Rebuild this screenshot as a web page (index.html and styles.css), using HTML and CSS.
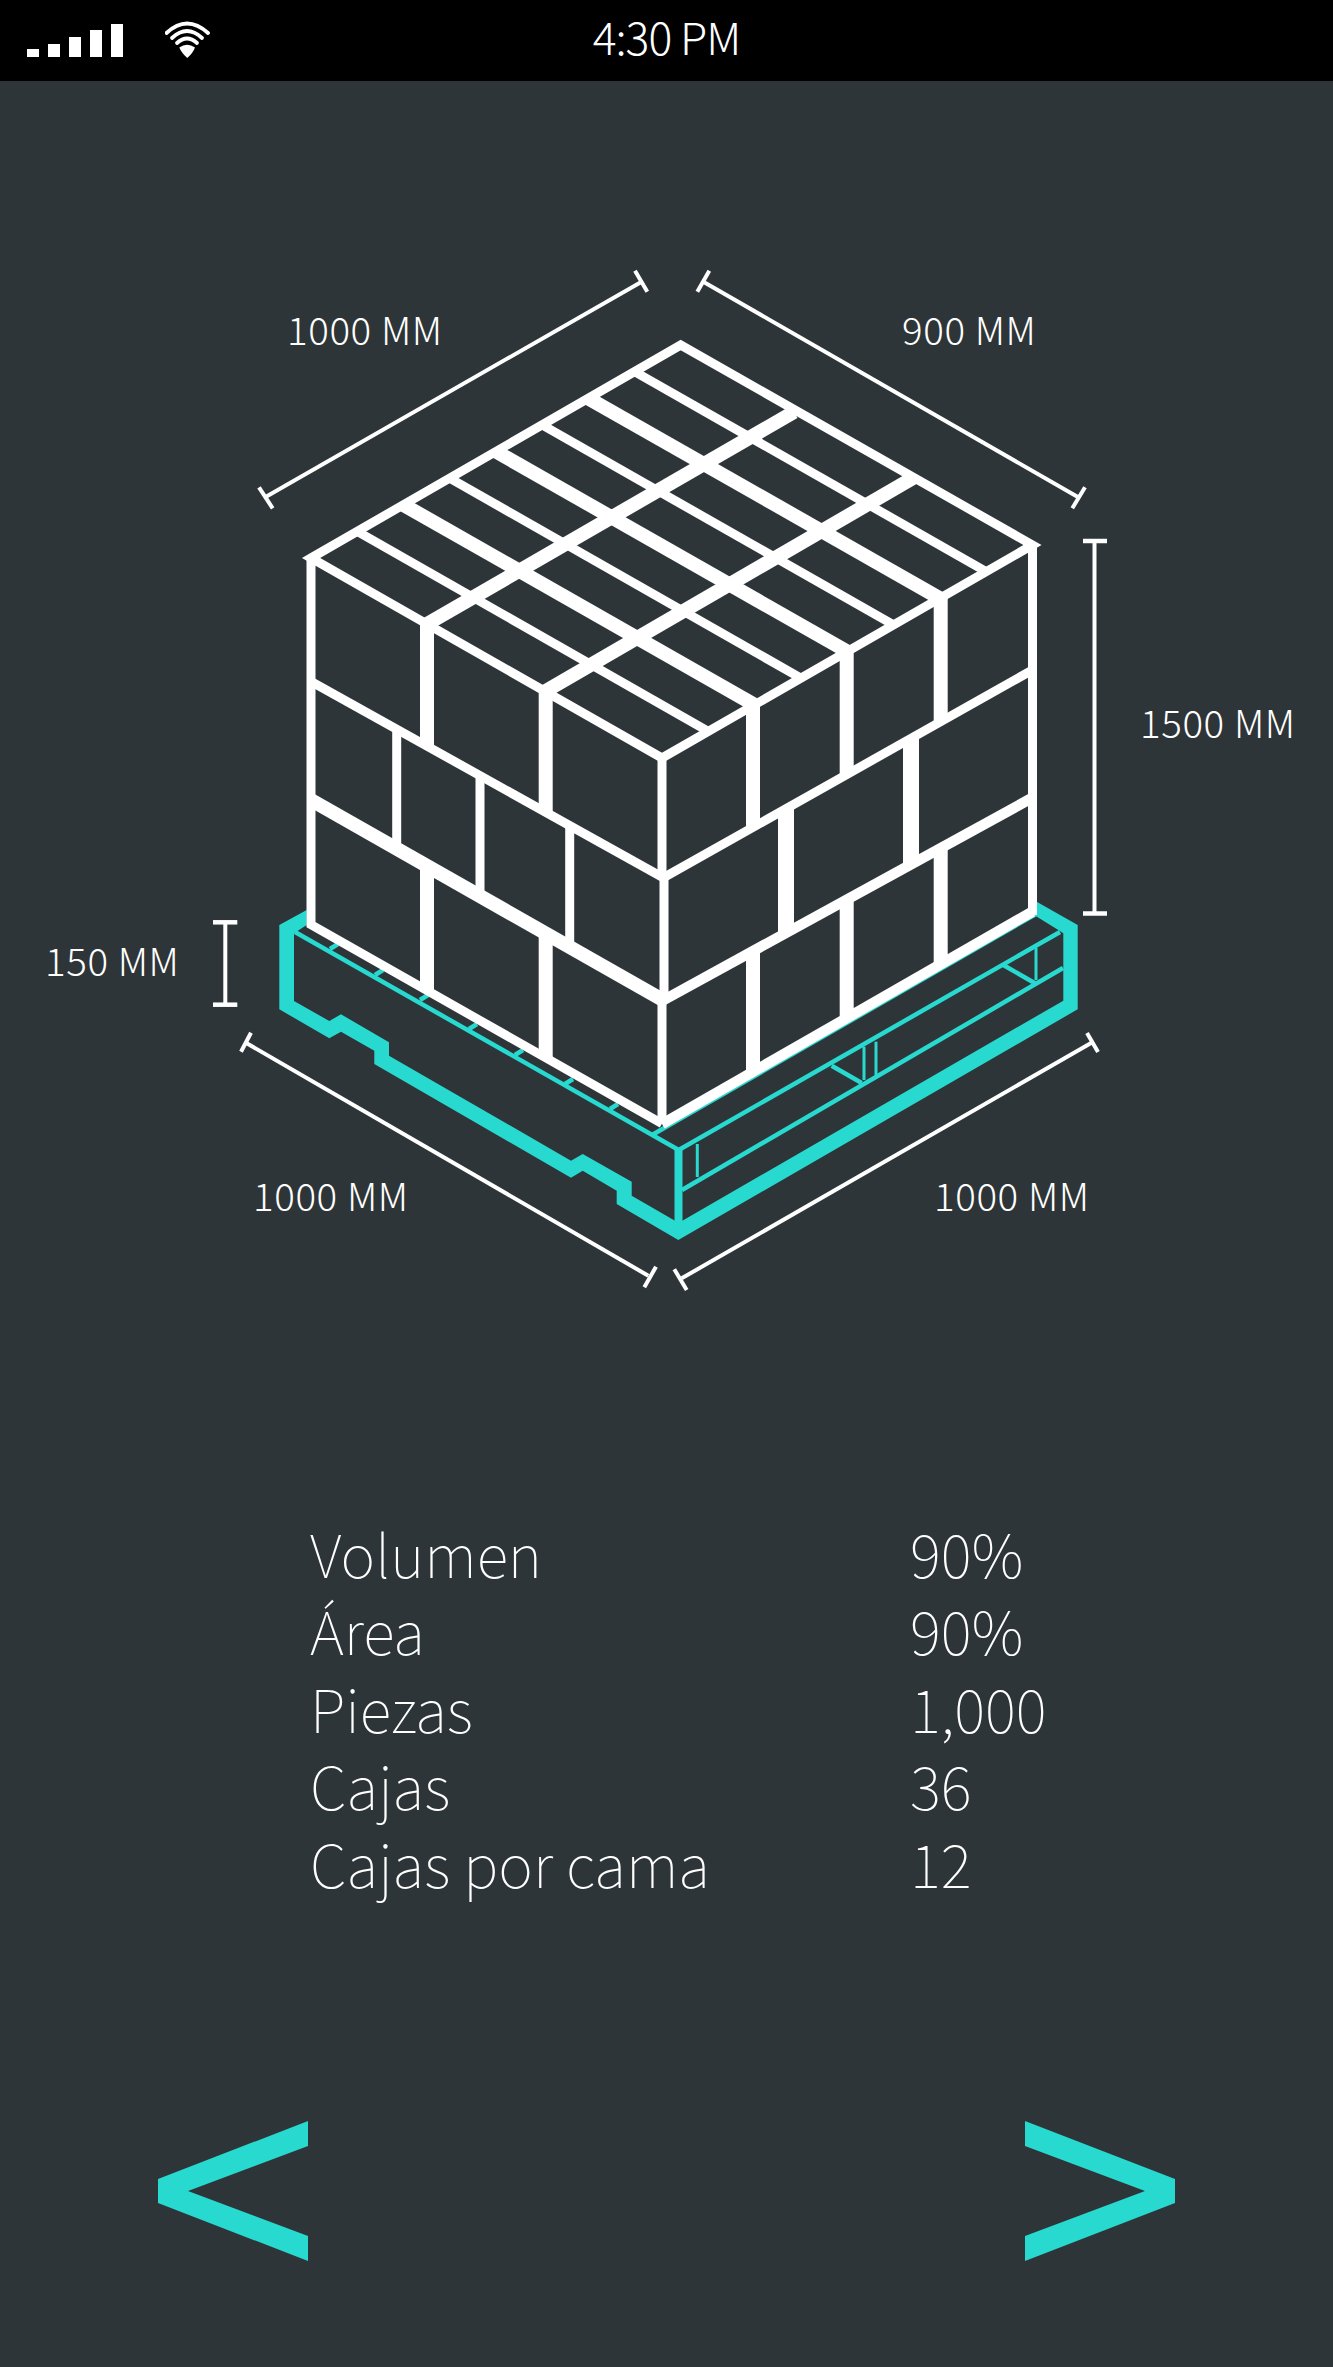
FILE: index.html
```html
<!DOCTYPE html>
<html>
<head>
    <meta charset="utf-8">
    <title>Paletizado</title>
    <link rel="stylesheet" href="styles.css">
</head>
<body>
    <div class="screen">
        <div class="status-bar">
            <div class="status-left">
                <div class="signal">
                    <span class="bar bar1"></span>
                    <span class="bar bar2"></span>
                    <span class="bar bar3"></span>
                    <span class="bar bar4"></span>
                    <span class="bar bar5"></span>
                </div>
                <svg class="wifi" viewBox="165 20 46 40" width="46" height="40">
                    <path class="wifi-arc" d="M166.5 33 Q187 14 208 33"/>
                    <path class="wifi-arc" d="M172 38 Q187 24 202 38"/>
                    <path class="wifi-arc" d="M177 43 Q187 34 197 43"/>
                    <path class="wifi-pick" d="M179.3 47.5 Q187 42 195 47.5 Q193 53 187.3 58 Q181.5 53 179.3 47.5Z"/>
                </svg>
            </div>
            <div class="time">4:30 PM</div>
        </div>

        <svg class="diagram" viewBox="0 81 1333 1319" width="1333" height="1319">
            <!-- pallet -->
            <polygon class="pallet" points="306.7,910 279.3,925 279.3,1009.3 329.3,1038.3 341,1031.7 374.3,1050.7 374.3,1064 571,1177.7 582.7,1170.7 616.7,1190.7 616.7,1204 678.3,1240 1077.7,1009.3 1077.7,925 1036.7,901.7 1035.7,916 1058.3,930 1063.3,933.3 1063.3,1000.7 682.3,1220.7 675,1220.7 631.7,1195.7 631.7,1181.7 582.7,1154 571,1160.7 389,1055.7 389,1042.3 341,1014.3 329.3,1021 294,1001 294,933.3 306.7,925"/>
            <g class="pallet-lines">
                <line x1="295" y1="932" x2="678.7" y2="1150"/>
                <line x1="652" y1="1135" x2="1036" y2="914"/>
                <line x1="678.7" y1="1150" x2="1060" y2="932"/>
                <line x1="682" y1="1190" x2="1063" y2="968"/>
                <line x1="831.7" y1="1065.7" x2="861.7" y2="1083"/>
                <line x1="1003.3" y1="965" x2="1035" y2="983.3"/>
                <line x1="330" y1="949" x2="338" y2="944"/>
                <line x1="375" y1="975" x2="383" y2="970"/>
                <line x1="420" y1="1000" x2="428" y2="995"/>
                <line x1="469" y1="1029" x2="477" y2="1024"/>
                <line x1="515" y1="1055" x2="523" y2="1050"/>
                <line x1="565" y1="1084" x2="573" y2="1079"/>
                <line x1="610" y1="1109" x2="618" y2="1104"/>
            </g>
            <line class="pallet-post" x1="678.5" y1="1150" x2="678.5" y2="1222"/>
            <g class="pallet-struts">
                <line x1="697.3" y1="1144" x2="697.3" y2="1177"/>
                <line x1="864" y1="1046.7" x2="864" y2="1080"/>
                <line x1="876" y1="1041.7" x2="876" y2="1075"/>
                <line x1="1036" y1="948" x2="1036" y2="980"/>
            </g>

            <!-- top face -->
            <g class="thin">
                <line x1="357.2" y1="531.4" x2="708.3" y2="731.4"/>
                <line x1="449.6" y1="478.1" x2="800.9" y2="678.1"/>
                <line x1="542.1" y1="424.9" x2="893.6" y2="624.9"/>
                <line x1="634.5" y1="371.6" x2="986.2" y2="571.6"/>
            </g>
            <g class="thick">
                <line x1="403.4" y1="504.8" x2="754.6" y2="704.8"/>
                <line x1="495.9" y1="451.5" x2="847.3" y2="651.5"/>
                <line x1="588.3" y1="398.3" x2="939.9" y2="598.3"/>
                <line x1="427" y1="624" x2="794" y2="412"/>
                <line x1="545.7" y1="691" x2="913" y2="478"/>
            </g>

            <!-- left face -->
            <line class="thin" x1="311" y1="681.5" x2="662" y2="877"/>
            <line class="thick" x1="311" y1="800" x2="662" y2="999.5"/>
            <g class="thick">
                <line x1="427" y1="624" x2="427" y2="746"/>
                <line x1="545.7" y1="691" x2="545.7" y2="812"/>
                <line x1="427" y1="866" x2="427" y2="990.5"/>
                <line x1="545.7" y1="933" x2="545.7" y2="1058"/>
            </g>
            <g class="thin">
                <line x1="396.7" y1="729" x2="396.7" y2="849"/>
                <line x1="480" y1="775.6" x2="480" y2="896"/>
                <line x1="569.7" y1="825.6" x2="569.7" y2="947"/>
            </g>

            <!-- right face -->
            <line class="thin" x1="662" y1="878.5" x2="1032.5" y2="670"/>
            <line class="mid" x1="662" y1="1001" x2="1032.5" y2="797.7"/>
            <g class="thick">
                <line x1="753" y1="705" x2="753" y2="827"/>
                <line x1="846.7" y1="652" x2="846.7" y2="775"/>
                <line x1="940.7" y1="598" x2="940.7" y2="722"/>
                <line x1="753" y1="951" x2="753" y2="1072"/>
                <line x1="846.7" y1="899.7" x2="846.7" y2="1018"/>
                <line x1="940.7" y1="848" x2="940.7" y2="964"/>
                <line class="wide" x1="786" y1="808.7" x2="786" y2="933"/>
                <line class="wide" x1="911" y1="738" x2="911" y2="864"/>
            </g>

            <!-- box outline -->
            <line class="thin" x1="662" y1="758" x2="662" y2="877"/>
            <line class="thin" x1="664" y1="877" x2="664" y2="1000"/>
            <line class="thin" x1="662" y1="1000" x2="662" y2="1124"/>
            <line class="mid" x1="662" y1="1124" x2="1032.5" y2="911.6"/>
            <polygon class="outline" points="311,558 680.7,345 1032.5,545 662,758"/>
            <polyline class="outline" points="311,558 311,924.7 662,1123.7"/>
            <line class="outline" x1="1032.5" y1="545" x2="1032.5" y2="915"/>

            <!-- dimensions -->
            <g class="dim-line">
                <line x1="266" y1="496.7" x2="641.7" y2="281.7"/>
                <line x1="259" y1="487.3" x2="272.7" y2="508.3"/>
                <line x1="635" y1="270.7" x2="647.3" y2="291.7"/>
                <line x1="703.3" y1="281.7" x2="1078.3" y2="497.3"/>
                <line x1="709.3" y1="270.7" x2="697.3" y2="291.7"/>
                <line x1="1085" y1="487.3" x2="1072.3" y2="508.3"/>
                <line x1="246.7" y1="1043.3" x2="648.3" y2="1275.7"/>
                <line x1="251" y1="1032.7" x2="241" y2="1051.7"/>
                <line x1="656" y1="1266.7" x2="644.3" y2="1287.3"/>
                <line x1="681.7" y1="1278.3" x2="1092" y2="1042.5"/>
                <line x1="674.3" y1="1269.3" x2="686.7" y2="1290"/>
                <line x1="1087" y1="1033" x2="1098" y2="1052"/>
                <line x1="1094.5" y1="541" x2="1094.5" y2="913"/>
                <line x1="225.3" y1="922" x2="225.3" y2="1005"/>
            </g>
            <g class="dim-cap">
                <line x1="1083" y1="541" x2="1107" y2="541"/>
                <line x1="1083" y1="913.5" x2="1107" y2="913.5"/>
                <line x1="213" y1="922.3" x2="237.3" y2="922.3"/>
                <line x1="213" y1="1004.7" x2="237.3" y2="1004.7"/>
            </g>
            <text class="dim-text" x="287" y="345">1000 MM</text>
            <text class="dim-text" x="902" y="345">900 MM</text>
            <text class="dim-text" x="1140" y="738">1500 MM</text>
            <text class="dim-text" x="45" y="975.7">150 MM</text>
            <text class="dim-text" x="253" y="1211">1000 MM</text>
            <text class="dim-text" x="934" y="1211">1000 MM</text>
        </svg>

        <div class="stats">
            <div class="stat-label">Volumen</div><div class="stat-value">90%</div>
            <div class="stat-label">Área</div><div class="stat-value">90%</div>
            <div class="stat-label">Piezas</div><div class="stat-value">1,000</div>
            <div class="stat-label">Cajas</div><div class="stat-value">36</div>
            <div class="stat-label">Cajas por cama</div><div class="stat-value">12</div>
        </div>

        <div class="nav">
            <svg class="arrow" viewBox="158 2121 150 140" width="150" height="140">
                <polygon points="308,2121 158,2179 158,2203 308,2261 308,2236 188,2191 308,2146"/>
            </svg>
            <svg class="arrow" viewBox="1025 2121 150 140" width="150" height="140">
                <polygon points="1025,2121 1175,2179 1175,2203 1025,2261 1025,2236 1145,2191 1025,2146"/>
            </svg>
        </div>
    </div>
</body>
</html>
```

FILE: styles.css
```css
body {
    margin: 0;
    background-color: #2e3538;
    font-family: "Noto Sans CJK JP", "Noto Sans", sans-serif;
    font-weight: 100;
    color: #fff;
}
.screen {
    width: 1333px;
    height: 2367px;
    overflow: hidden;
}
.status-bar {
    height: 81px;
    background-color: #000;
    display: grid;
    grid-template-columns: 1fr auto 1fr;
    align-items: center;
}
.status-left {
    display: flex;
    align-items: flex-end;
    gap: 42px;
    padding-left: 27px;
    height: 57px;
    align-self: start;
}
.signal {
    display: flex;
    align-items: flex-end;
    gap: 9px;
}
.bar {
    display: block;
    width: 12px;
    background-color: #fff;
}
.bar1 { height: 8px; }
.bar2 { height: 13px; }
.bar3 { height: 20px; }
.bar4 { height: 27px; }
.bar5 { height: 33px; }
.wifi {
    display: block;
    margin-bottom: -3px;
}
.wifi-arc {
    fill: none;
    stroke: #fff;
    stroke-width: 3.8;
    stroke-linecap: round;
}
.wifi-pick {
    fill: #fff;
}
.time {
    font-size: 44.5px;
    font-weight: 300;
    letter-spacing: -1px;
    line-height: 60px;
    padding-bottom: 10px;
}
.diagram {
    display: block;
}
.thin, .thin line {
    stroke: #fff;
    stroke-width: 9;
}
.mid {
    stroke: #fff;
    stroke-width: 10.5;
}
.thick, .thick line {
    stroke: #fff;
    stroke-width: 14;
}
.thick .wide {
    stroke-width: 16;
}
.outline {
    fill: none;
    stroke: #fff;
    stroke-width: 9;
    stroke-miterlimit: 4;
}
.pallet {
    fill: #28d9d0;
}
.pallet-lines line {
    stroke: #28d9d0;
    stroke-width: 4.5;
}
.pallet-post {
    stroke: #28d9d0;
    stroke-width: 8;
}
.pallet-struts line {
    stroke: #28d9d0;
    stroke-width: 3;
}
.dim-line line {
    stroke: #fff;
    stroke-width: 4;
}
.dim-cap line {
    stroke: #fff;
    stroke-width: 4.5;
}
.dim-text {
    fill: #fff;
    font-size: 38.5px;
    font-weight: 300;
    letter-spacing: 0.6px;
}
.stats {
    display: grid;
    grid-template-columns: 600px auto;
    padding-left: 310px;
    margin-top: 114px;
    font-size: 59px;
    line-height: 77.4px;
}
.nav {
    display: flex;
    justify-content: space-between;
    padding: 0 158px;
    margin-top: 220px;
}
.arrow {
    display: block;
    fill: #28d9d0;
}
```
